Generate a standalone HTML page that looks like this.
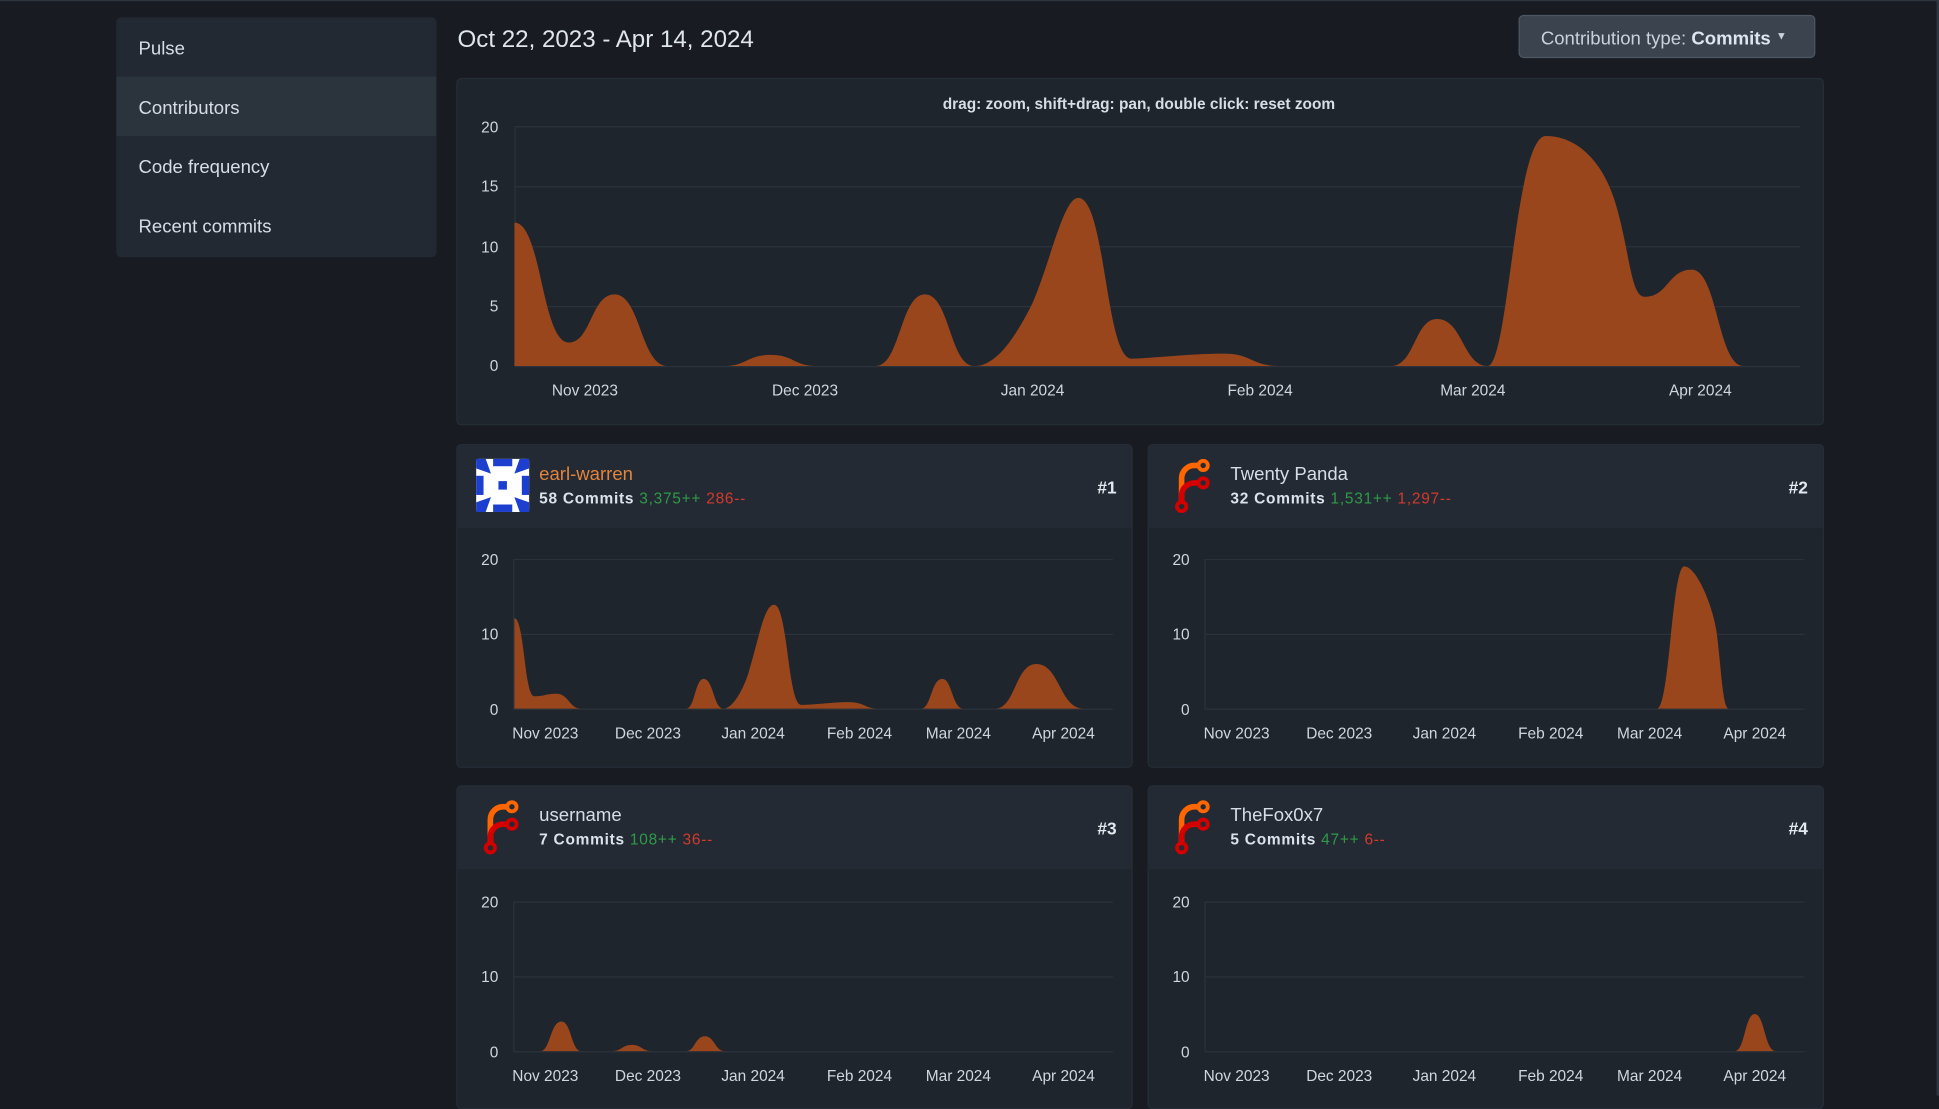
<!DOCTYPE html>
<html><head><meta charset="utf-8"><style>
html,body{margin:0;padding:0;width:1939px;height:1097px;overflow:hidden;background:#181c22;}
#w{position:absolute;left:0;top:0;width:1568px;height:887px;transform:scale(1.23661);transform-origin:0 0;font-family:"Liberation Sans",sans-serif;color:#d8dee6;}
.edge{position:absolute;left:0;top:0;width:1566px;height:885px;border-top:1px solid #2e353e;border-right:2px solid #2e353e;}
.side{position:absolute;left:94px;top:14px;width:259px;height:194px;background:#222932;border-radius:4px;overflow:hidden;}
.side div{height:48px;line-height:52px;padding-left:18px;font-size:15px;color:#d6dde5;}
.side .act{background:#2b333d;}
.date{position:absolute;left:370px;top:21px;font-size:19.5px;color:#dfe5ec;}
.btn{position:absolute;left:1228px;top:12px;width:240px;height:35px;background:#3a434e;border:1px solid #4d5661;border-radius:4px;box-sizing:border-box;font-size:15px;line-height:38px;padding-left:17px;color:#c9d2dc;}
.btn b{color:#dde6f0}
.card{position:absolute;background:#1e252d;border:1px solid #262d36;border-radius:4px;overflow:hidden;}
.hd{position:absolute;left:0;top:0;right:0;height:67px;background:#232a33;}
.name{position:absolute;left:66px;top:15px;font-size:15px;color:#d6dde5;}
.st{position:absolute;left:66px;top:36px;font-size:12.5px;font-weight:bold;color:#dbe2ea;letter-spacing:.6px;}
.g{color:#2f9a4a;font-weight:normal}.r{color:#d33a2c;font-weight:normal}
.rk{position:absolute;right:12px;top:26px;font-size:14px;font-weight:bold;color:#e3e8ee;}
svg text{font-family:"Liberation Sans",sans-serif;font-size:12.5px;fill:#cfd6de;}
</style></head><body><div id="w">
<div class="edge"></div>
<div class="side"><div>Pulse</div><div class="act">Contributors</div><div>Code frequency</div><div>Recent commits</div></div>
<div class="date">Oct 22, 2023 - Apr 14, 2024</div>
<div class="btn">Contribution type: <b>Commits</b> <span style="font-size:9px;position:relative;top:-4px">▼</span></div>
<div class="card" style="left:369px;top:63px;width:1104px;height:279px;"></div>
<div class="card" style="left:369px;top:359px;width:545px;height:260px;"><div class="hd"></div>
<svg style="position:absolute;left:15px;top:11px" width="43" height="43" viewBox="0 0 5 5"><rect width="5" height="5" rx=".25" fill="#fff"/><g fill="#1d3fcf"><rect x="1.6" y="0" width="1.8" height=".7"/><rect x="1.6" y="4.3" width="1.8" height=".7"/><rect x="0" y="1.6" width=".7" height="1.8"/><rect x="4.3" y="1.6" width=".7" height="1.8"/><rect x="2.1" y="2.1" width=".8" height=".8"/><path d="M0 0H.9L1.4 1.4ZM5 0H4.1L3.6 1.4ZM0 5H.9L1.4 3.6ZM5 5H4.1L3.6 3.6ZM0 0V.9L1.4 1.4ZM5 0V.9L3.6 1.4ZM0 5V4.1L1.4 3.6ZM5 5V4.1L3.6 3.6Z"/></g></svg>
<div class="name" style="color:#e2843c">earl-warren</div><div class="st">58 Commits <span class="g">3,375++</span> <span class="r">286--</span></div><div class="rk">#1</div></div>
<div class="card" style="left:928px;top:359px;width:545px;height:260px;"><div class="hd"></div>
<svg style="position:absolute;left:17px;top:11px" width="34" height="44" viewBox="30 0 140 212"><g transform="translate(6 6)" fill="none" stroke-width="22"><path d="M58 168V70a50 50 0 0 1 50-50h20" stroke="#ff6600"/><path d="M58 168v-30a50 50 0 0 1 50-50h20" stroke="#d40000"/><circle cx="142" cy="20" r="18" stroke="#ff6600" stroke-width="15"/><circle cx="142" cy="88" r="18" stroke="#d40000" stroke-width="15"/><circle cx="58" cy="180" r="18" stroke="#d40000" stroke-width="15"/></g></svg>
<div class="name">Twenty Panda</div><div class="st">32 Commits <span class="g">1,531++</span> <span class="r">1,297--</span></div><div class="rk">#2</div></div>
<div class="card" style="left:369px;top:635px;width:545px;height:260px;"><div class="hd"></div>
<svg style="position:absolute;left:17px;top:11px" width="34" height="44" viewBox="30 0 140 212"><g transform="translate(6 6)" fill="none" stroke-width="22"><path d="M58 168V70a50 50 0 0 1 50-50h20" stroke="#ff6600"/><path d="M58 168v-30a50 50 0 0 1 50-50h20" stroke="#d40000"/><circle cx="142" cy="20" r="18" stroke="#ff6600" stroke-width="15"/><circle cx="142" cy="88" r="18" stroke="#d40000" stroke-width="15"/><circle cx="58" cy="180" r="18" stroke="#d40000" stroke-width="15"/></g></svg>
<div class="name">username</div><div class="st">7 Commits <span class="g">108++</span> <span class="r">36--</span></div><div class="rk">#3</div></div>
<div class="card" style="left:928px;top:635px;width:545px;height:260px;"><div class="hd"></div>
<svg style="position:absolute;left:17px;top:11px" width="34" height="44" viewBox="30 0 140 212"><g transform="translate(6 6)" fill="none" stroke-width="22"><path d="M58 168V70a50 50 0 0 1 50-50h20" stroke="#ff6600"/><path d="M58 168v-30a50 50 0 0 1 50-50h20" stroke="#d40000"/><circle cx="142" cy="20" r="18" stroke="#ff6600" stroke-width="15"/><circle cx="142" cy="88" r="18" stroke="#d40000" stroke-width="15"/><circle cx="58" cy="180" r="18" stroke="#d40000" stroke-width="15"/></g></svg>
<div class="name">TheFox0x7</div><div class="st">5 Commits <span class="g">47++</span> <span class="r">6--</span></div><div class="rk">#4</div></div>

<svg style="position:absolute;left:0;top:0" width="1568" height="887">
<g stroke="#2b323b" stroke-width="1">
<path d="M416 102.5H1456M416 151H1456M416 199.5H1456M416 248H1456M416 296.5H1456"/>
<path d="M415 452.5H900M415 513H900M415 573.5H900M974 452.5H1459M974 513H1459M974 573.5H1459"/>
<path d="M415 729.5H900M415 790H900M415 850.5H900M974 729.5H1459M974 790H1459M974 850.5H1459"/>
<path d="M416.5 102V296M415.5 452V573M974.5 452V573M415.5 729V850M974.5 729V850"/>
</g>
<text x="921" y="88" text-anchor="middle" style="font-weight:bold;font-size:12.5px;fill:#d7dde4">drag: zoom, shift+drag: pan, double click: reset zoom</text>
<g text-anchor="end"><text x="403" y="107">20</text><text x="403" y="155">15</text><text x="403" y="204">10</text><text x="403" y="252">5</text><text x="403" y="300">0</text>
<text x="403" y="457">20</text><text x="403" y="517">10</text><text x="403" y="578">0</text>
<text x="962" y="457">20</text><text x="962" y="517">10</text><text x="962" y="578">0</text>
<text x="403" y="734">20</text><text x="403" y="794">10</text><text x="403" y="855">0</text>
<text x="962" y="734">20</text><text x="962" y="794">10</text><text x="962" y="855">0</text></g>
<g text-anchor="middle"><text x="473" y="320">Nov 2023</text><text x="651" y="320">Dec 2023</text><text x="835" y="320">Jan 2024</text><text x="1019" y="320">Feb 2024</text><text x="1191" y="320">Mar 2024</text><text x="1375" y="320">Apr 2024</text></g>
<g text-anchor="middle"><text x="441" y="597">Nov 2023</text><text x="524" y="597">Dec 2023</text><text x="609" y="597">Jan 2024</text><text x="695" y="597">Feb 2024</text><text x="775" y="597">Mar 2024</text><text x="860" y="597">Apr 2024</text></g>
<g text-anchor="middle"><text x="1000" y="597">Nov 2023</text><text x="1083" y="597">Dec 2023</text><text x="1168" y="597">Jan 2024</text><text x="1254" y="597">Feb 2024</text><text x="1334" y="597">Mar 2024</text><text x="1419" y="597">Apr 2024</text></g>
<g text-anchor="middle"><text x="441" y="874">Nov 2023</text><text x="524" y="874">Dec 2023</text><text x="609" y="874">Jan 2024</text><text x="695" y="874">Feb 2024</text><text x="775" y="874">Mar 2024</text><text x="860" y="874">Apr 2024</text></g>
<g text-anchor="middle"><text x="1000" y="874">Nov 2023</text><text x="1083" y="874">Dec 2023</text><text x="1168" y="874">Jan 2024</text><text x="1254" y="874">Feb 2024</text><text x="1334" y="874">Mar 2024</text><text x="1419" y="874">Apr 2024</text></g>
<g fill="#9a461c">
<path d="M416 296V180C438 180 438 277 460 277C478 277 478 238 497 238C518 238 518 296 540 296H585C604 296 604 287 623 287C642 287 642 296 660 296H708C728 296 728 238 748 238C768 238 768 296 788 296C805 296 820 275 835 245C850 210 860 160 872 160C894 160 894 290 915 290C930 290 960 286 990 286C1012 286 1012 296 1035 296H1125C1144 296 1144 258 1162 258C1183 258 1183 296 1203 296C1220 296 1225 110 1250 110C1275 110 1295 130 1305 160C1318 200 1318 240 1330 240C1349 240 1349 218 1368 218C1389 218 1389 296 1410 296Z"/>
<path d="M416 573V500C424 500 424 563 432 563C441 563 441 561 450 561C460 561 460 573 470 573H555C562 573 562 549 569 549C577 549 577 573 585 573C592 573 600 560 605 545C614 515 618 489 626 489C637 489 637 570 648 570C660 570 680 567 690 568C700 569 700 573 710 573H745C753 573 753 549 762 549C770 549 770 573 779 573H805C821 573 821 537 838 537C857 537 857 573 876 573Z"/>
<path d="M1340 573C1350 573 1352 458 1362 458C1372 458 1385 490 1388 510C1392 540 1393 573 1398 573Z"/>
<path d="M437 850C445 850 445 826 454 826C462 826 462 850 470 850H495C503 850 503 845 511 845C519 845 519 850 527 850H555C562 850 562 838 570 838C578 838 578 850 586 850Z"/>
<path d="M1403 850C1411 850 1411 820 1419 820C1427 820 1427 850 1436 850Z"/>
</g>
</svg>
</div></body></html>
